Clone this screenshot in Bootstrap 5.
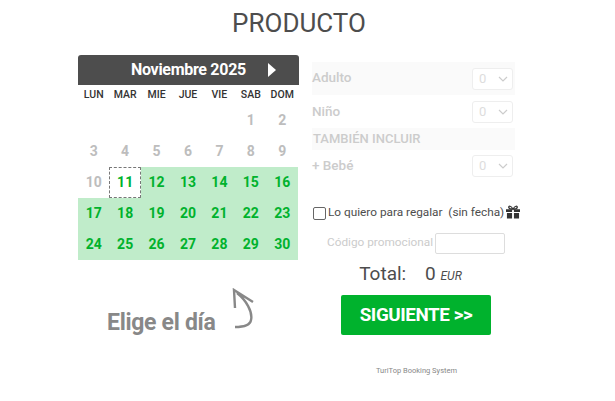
<!DOCTYPE html>
<html lang="es">
<head>
  <meta charset="UTF-8" />
  <title>Producto</title>
  <link href="https://cdn.jsdelivr.net/npm/bootstrap@5.3.3/dist/css/bootstrap.min.css" rel="stylesheet" />
  <style>
    body { font-family: Roboto, "Liberation Sans", sans-serif; background: #fff; color: #4d4d4d; overflow: hidden; }
    .page-title { font-size: 26px; font-weight: 400; color: #4d4d4d; line-height: 30px; margin: 8px 0 17px; padding-right: 17px; text-align: center; }
    .booking { padding-left: 78px; gap: 13px; }
    .cal { width: 221px; }
    .cal-head { height: 30px; background: #4d4d4d; color: #fff; font-size: 16px; font-weight: 700; letter-spacing: -0.3px; border-radius: 3px 3px 0 0; padding-left: 53px; }
    .cal-next { width: 0; height: 0; border-left: 8px solid #fff; border-top: 7px solid transparent; border-bottom: 7px solid transparent; margin-left: 22px; }
    .cal-grid { display: grid; grid-template-columns: repeat(7, 31.43px); width: 220px; }
    .cal-dow { height: 20px; font-size: 10.5px; font-weight: 500; color: #333; text-align: center; line-height: 20px; }
    .cal-day { height: 31px; font-size: 14px; font-weight: 700; line-height: 31px; text-align: center; color: #bdbdbd; }
    .cal-day.on { background: #c0ecca; color: #00b22d; }
    .cal-day.today { position: relative; color: #00b22d; }
    .cal-day.today::after { content: ""; position: absolute; left: 0; top: 0; width: 32px; height: 31px; border: 1px dashed #777; border-radius: 1px; }
    .cal-hint { color: #888; font-size: 23px; font-weight: 700; letter-spacing: -0.3px; line-height: 26px; padding: 28px 0 0 29px; gap: 16px; }
    .cal-hint span { margin-top: 22px; }
    .side { width: 203px; }
    .opt { padding-left: 0; color: #ccc; font-size: 13.5px; font-weight: 500; }
    .opt-shade { background: #fafafa; }
    .opt-adult { height: 33px; margin-top: 7px; }
    .opt-adult > span:first-child, .opt-baby > span:first-child { padding-bottom: 2px; }
    .opt-child { height: 33px; }
    .opt-head { height: 22px; line-height: 22px; font-size: 13px; padding-left: 1px; }
    .opt-baby { height: 32px; }
    .pick { width: 41px; height: 22px; border: 1px solid #eee; border-radius: 3px; background: #fff; color: #ddd; font-size: 13px; font-weight: 400; padding: 0 4px 0 6px !important; margin-right: 2px; }
    .gift-row { margin-top: 21px; font-size: 11.8px; color: #4d4d4d; height: 20px; white-space: nowrap; }
    .gift-box { flex-shrink: 0; width: 13px; height: 13px; border: 1px solid #666; border-radius: 2px; margin-right: 2px; margin-left: 1px; }
    .gift-icon { flex-shrink: 0; margin-left: 2px; margin-top: -2px; }
    .promo { margin-top: 9px; height: 22px; font-size: 11.8px; color: #ccc; padding-left: 15px; gap: 2px; }
    .promo-input { width: 70px; height: 21px; border: 1px solid #ddd; border-radius: 2px; }
    .total { margin-top: 9px; font-size: 19px; line-height: 22px; color: #4d4d4d; text-align: center; padding-right: 6px; }
    .total em { font-size: 12px; }
    .next-btn { width: 150px; height: 40px; background: #00b22d; color: #fff; font-size: 18.8px; font-weight: 700; letter-spacing: -0.4px; border-radius: 2px; border: 0; margin: 8px 0 0 29px; padding: 0; }
    .credit { font-size: 7.5px; color: #888; text-align: center; margin-top: 31px; padding-left: 6px; line-height: 10px; }
  </style>
</head>
<body>
  <h1 class="page-title">PRODUCTO</h1>
  <div class="booking d-flex">
    <div class="cal">
      <div class="cal-head d-flex align-items-center">
        <span>Noviembre 2025</span>
        <span class="cal-next"></span>
      </div>
      <div class="cal-grid" id="calGrid"></div>
      <div class="cal-hint d-flex align-items-start">
        <span>Elige el día</span>
        <svg width="24" height="44" viewBox="0 0 24 44" fill="none" stroke="#888" stroke-width="2.4">
          <path d="M3 20 L2 2 L21 14 M5 5 C14 12 21 24 19 32 C18 38 10 39 3 39" />
        </svg>
      </div>
    </div>
    <div class="side">
      <div class="opt opt-shade opt-adult d-flex align-items-center justify-content-between">
        <span>Adulto</span>
        <span class="pick d-flex align-items-center justify-content-between">0
          <svg width="10" height="6" viewBox="0 0 10 6" fill="none" stroke="#ccc" stroke-width="1.2"><path d="M1 1 L5 5 L9 1" /></svg>
        </span>
      </div>
      <div class="opt opt-child d-flex align-items-center justify-content-between">
        <span>Niño</span>
        <span class="pick d-flex align-items-center justify-content-between">0
          <svg width="10" height="6" viewBox="0 0 10 6" fill="none" stroke="#ccc" stroke-width="1.2"><path d="M1 1 L5 5 L9 1" /></svg>
        </span>
      </div>
      <div class="opt opt-shade opt-head">TAMBIÉN INCLUIR</div>
      <div class="opt opt-baby d-flex align-items-center justify-content-between">
        <span>+ Bebé</span>
        <span class="pick d-flex align-items-center justify-content-between">0
          <svg width="10" height="6" viewBox="0 0 10 6" fill="none" stroke="#ccc" stroke-width="1.2"><path d="M1 1 L5 5 L9 1" /></svg>
        </span>
      </div>
      <div class="gift-row d-flex align-items-center">
        <span class="gift-box"></span>
        <span>Lo quiero para regalar&nbsp; (sin fecha)</span>
        <svg class="gift-icon" width="14" height="14" viewBox="0 0 15 14" fill="#333">
          <path d="M0 4h6.500v3H0zM8.500 4H15v3H8.500zM1 8h5.500v6H1zM8.500 8H14v6H8.500z" />
          <path d="M7.500 4C5.500 0 2.500 0 3 2.500 3.500 4 5.500 4 7.500 4C9.500 4 11.500 4 12 2.500 12.500 0 9.500 0 7.500 4Z" fill="none" stroke="#333" stroke-width="1.300" />
        </svg>
      </div>
      <div class="promo d-flex align-items-center">
        <span>Código promocional</span>
        <span class="promo-input"></span>
      </div>
      <div class="total">Total: &nbsp; &nbsp;0 <em>EUR</em></div>
      <button class="next-btn btn" type="button">SIGUIENTE &gt;&gt;</button>
      <div class="credit">TuriTop Booking System</div>
    </div>
  </div>

  <script>
    // Noviembre 2025 starts on a Saturday, bookable from the 11th
    const grid = document.getElementById("calGrid");
    ["LUN", "MAR", "MIE", "JUE", "VIE", "SAB", "DOM"].forEach(d => {
      grid.innerHTML += `<div class="cal-dow">${d}</div>`;
    });
    for (let i = 0; i < 5; i++) grid.innerHTML += `<div class="cal-day"></div>`;
    for (let d = 1; d <= 30; d++) {
      const cls = d === 11 ? "cal-day today" : d > 11 ? "cal-day on" : "cal-day";
      grid.innerHTML += `<div class="${cls}">${d}</div>`;
    }
  </script>
  <script src="https://cdn.jsdelivr.net/npm/bootstrap@5.3.3/dist/js/bootstrap.bundle.min.js"></script>
</body>
</html>
